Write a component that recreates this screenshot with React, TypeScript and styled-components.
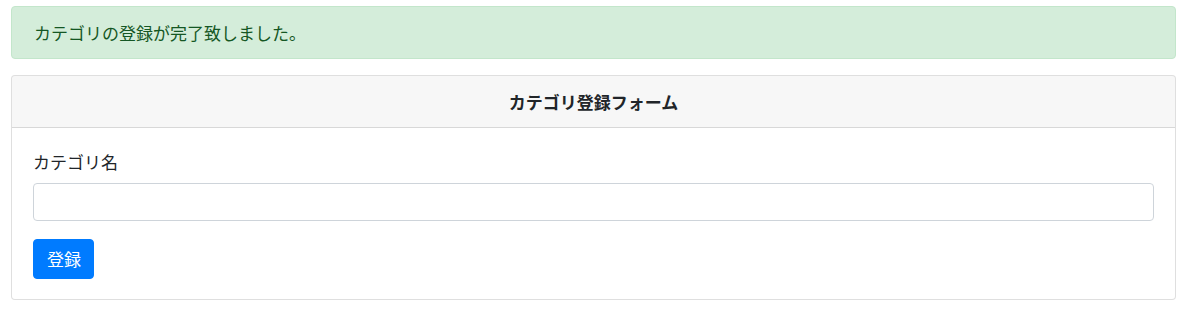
import React from "react";
import styled, { createGlobalStyle } from "styled-components";

const GlobalStyle = createGlobalStyle`
  html, body { margin: 0; padding: 0; background: #fff; }
  body {
    font-family: "Noto Sans CJK JP", "Noto Sans", "Liberation Sans", sans-serif;
    font-size: 17px;
    color: #212529;
  }
  * { box-sizing: border-box; }
`;

const Page = styled.div`
  padding: 6px 10px 0 11px;
  display: flex;
  flex-direction: column;
  gap: 16px;
`;

const Alert = styled.div`
  background: #d4edda;
  border: 1px solid #c3e6cb;
  color: #155724;
  border-radius: 4px;
  padding: 12px 20px 12px 22px;
  line-height: 27px;
  font-size: 17px;
`;

const Card = styled.div`
  border: 1px solid rgba(0, 0, 0, 0.125);
  border-radius: 4px;
  background: #fff;
  display: flex;
  flex-direction: column;
  overflow: hidden;
`;

const CardHeader = styled.div`
  background: rgba(0, 0, 0, 0.03);
  border-bottom: 1px solid rgba(0, 0, 0, 0.125);
  padding: 12px 20px;
  line-height: 27px;
  text-align: center;
  font-weight: 700;
  font-size: 17px;
  color: #212529;
`;

const CardBody = styled.div`
  padding: 20px 21px;
  display: flex;
  flex-direction: column;
  align-items: flex-start;
`;

const FormGroup = styled.div`
  width: 100%;
  margin-bottom: 18px;
  display: flex;
  flex-direction: column;
`;

const Label = styled.label`
  line-height: 27px;
  margin-bottom: 8px;
  font-size: 17px;
  color: #212529;
`;

const Input = styled.input`
  width: 100%;
  height: 38px;
  border: 1px solid #ced4da;
  border-radius: 4px;
  padding: 6px 12px;
  font-size: 16px;
  font-family: inherit;
  color: #495057;
  background: #fff;
  outline: none;
`;

const Button = styled.button`
  height: 40px;
  padding: 0 12px 0 13px;
  background: #007bff;
  border: 1px solid #007bff;
  border-radius: 4px;
  color: #fff;
  font-size: 17px;
  font-family: inherit;
  line-height: 26px;
  cursor: pointer;
`;

export default function App() {
  return (
    <>
      <GlobalStyle />
      <Page>
        <Alert>カテゴリの登録が完了致しました。</Alert>
        <Card>
          <CardHeader>カテゴリ登録フォーム</CardHeader>
          <CardBody>
            <FormGroup>
              <Label htmlFor="name">カテゴリ名</Label>
              <Input id="name" type="text" />
            </FormGroup>
            <Button type="submit">登録</Button>
          </CardBody>
        </Card>
      </Page>
    </>
  );
}
